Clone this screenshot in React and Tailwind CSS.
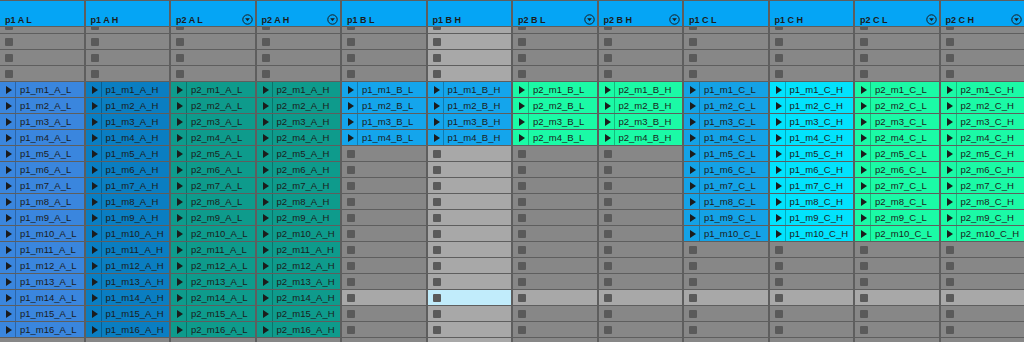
const tracks = [
  { name: 'p1 A L', color: 'bg-[#3a86de]', count: 16, tag: 'p1', part: 'A_L', dd: false },
  { name: 'p1 A H', color: 'bg-[#0a7ec2]', count: 16, tag: 'p1', part: 'A_H', dd: false },
  { name: 'p2 A L', color: 'bg-[#0e9b8c]', count: 16, tag: 'p2', part: 'A_L', dd: true },
  { name: 'p2 A H', color: 'bg-[#0e9b8c]', count: 16, tag: 'p2', part: 'A_H', dd: true },
  { name: 'p1 B L', color: 'bg-[#14a5ec]', count: 4, tag: 'p1', part: 'B_L', dd: false },
  { name: 'p1 B H', color: 'bg-[#14a5ec]', count: 4, tag: 'p1', part: 'B_H', dd: false, selected: true },
  { name: 'p2 B L', color: 'bg-[#1bfaa6]', count: 4, tag: 'p2', part: 'B_L', dd: true },
  { name: 'p2 B H', color: 'bg-[#1bfaa6]', count: 4, tag: 'p2', part: 'B_H', dd: true },
  { name: 'p1 C L', color: 'bg-[#14a2e6]', count: 10, tag: 'p1', part: 'C_L', dd: false },
  { name: 'p1 C H', color: 'bg-[#02e3fd]', count: 10, tag: 'p1', part: 'C_H', dd: false },
  { name: 'p2 C L', color: 'bg-[#1bfaa6]', count: 10, tag: 'p2', part: 'C_L', dd: true },
  { name: 'p2 C H', color: 'bg-[#1bfaa6]', count: 10, tag: 'p2', part: 'C_H', dd: true },
];

// 4 empty slots above the clips, then 17 slots (m1..m17)
const ROWS = 21;
const FIRST_CLIP = 4;
const SELECTED_ROW = FIRST_CLIP + 13;

const font = { fontFamily: '"Liberation Sans", Arial, sans-serif' };

const DropIcon = () => (
  <svg width="11" height="11" viewBox="0 0 11 11" className="shrink-0">
    <circle cx="5.5" cy="5.5" r="4.7" fill="none" stroke="#1c1c1c" strokeWidth="1" />
    <path d="M3.2 4.3 L7.8 4.3 L5.5 7.2 Z" fill="#1c1c1c" />
  </svg>
);

const Play = () => (
  <svg width="6" height="8" viewBox="0 0 6 8">
    <path d="M0 0 L6 4 L0 8 Z" fill="#1c1c1c" />
  </svg>
);

const ClipSlot = ({ track, row }) => {
  const clip = row - FIRST_CLIP + 1;
  if (row >= FIRST_CLIP && clip <= track.count) {
    return (
      <div className={`h-[15px] shrink-0 flex items-center ${track.color}`}>
        <div className="w-[16px] h-full flex items-center pl-[6px] border-r border-black/25">
          <Play />
        </div>
        <span className="pl-[4px] text-[9.5px] leading-none text-[#1c1c1c] whitespace-nowrap">
          {`${track.tag}_m${clip}_${track.part}`}
        </span>
      </div>
    );
  }
  let bg = 'bg-[#878787]';
  if (track.selected || row === SELECTED_ROW) bg = 'bg-[#a8a8a8]';
  if (track.selected && row === SELECTED_ROW) bg = 'bg-[#c1ecfb]';
  return (
    <div className={`h-[15px] shrink-0 flex items-center ${bg}`}>
      <div className="ml-[5px] w-[8px] h-[8px] rounded-[1px] bg-[#5a5a5a]" />
    </div>
  );
};

const Track = ({ track }) => (
  <div className="flex flex-col min-w-0">
    <div className="h-[25px] shrink-0 bg-[#05a5f5] flex items-end justify-between pl-[5px] pr-[2px] pb-[1px]">
      <span className="text-[9px] font-bold leading-[9px] text-[#1c1c1c] whitespace-nowrap">{track.name}</span>
      {track.dd && <DropIcon />}
    </div>
    <div className="mt-px flex-1 overflow-hidden">
      <div className="-mt-[9px] flex flex-col gap-y-px">
        {Array.from({ length: ROWS }, (_, r) => (
          <ClipSlot key={r} track={track} row={r} />
        ))}
      </div>
    </div>
  </div>
);

export default function App() {
  return (
    <div style={font} className="w-[1024px] h-[342px] overflow-hidden bg-[#5e5e5e] pt-px grid grid-cols-12 gap-x-[2px]">
      {tracks.map((t) => (
        <Track key={t.name} track={t} />
      ))}
    </div>
  );
}
